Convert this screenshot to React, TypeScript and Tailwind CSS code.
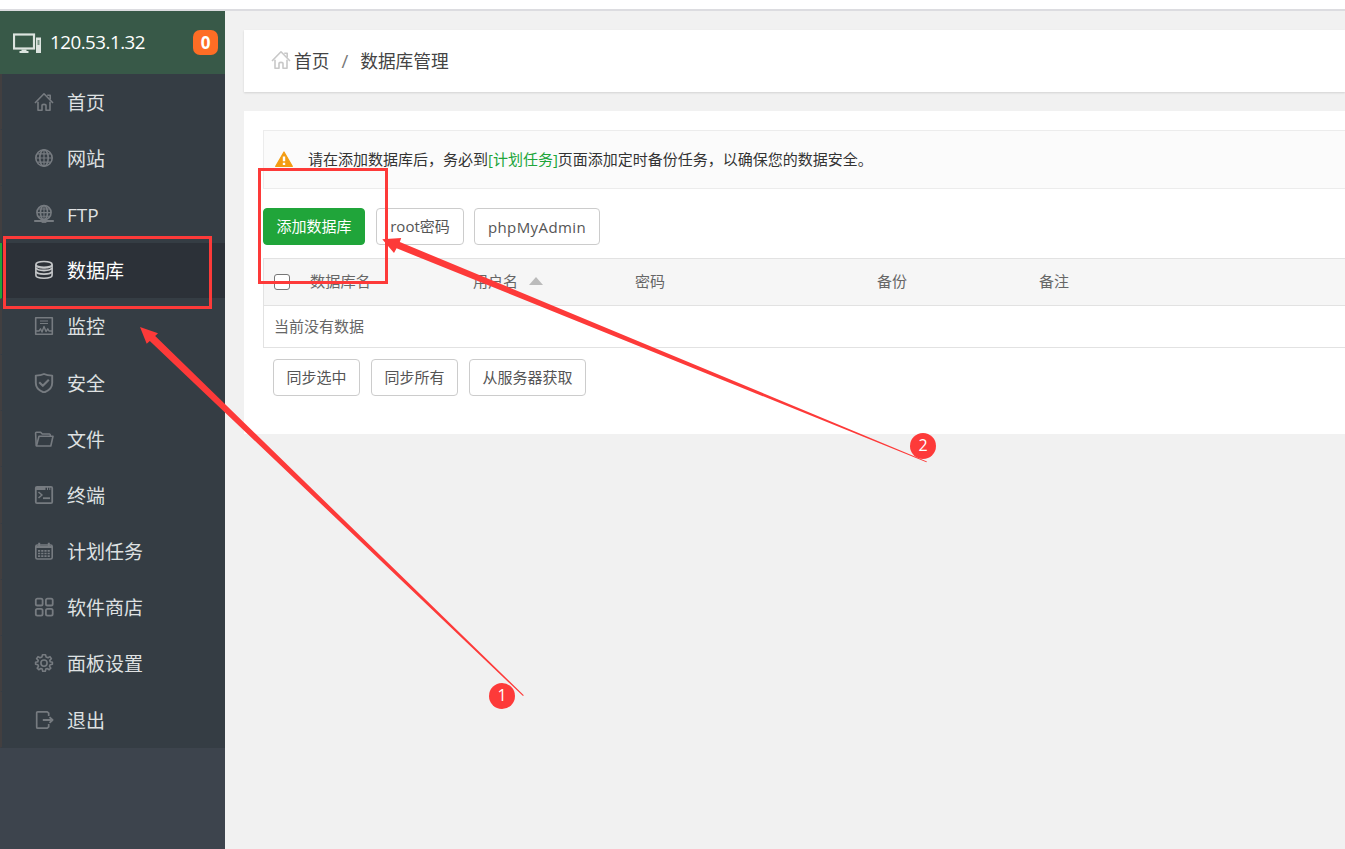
import React from "react";

type IconProps = { className?: string };

const Svg = ({ className = "", children }: IconProps & { children: React.ReactNode }) => (
  <svg
    viewBox="0 0 20 20"
    className={`h-5 w-5 shrink-0 ${className}`}
    fill="none"
    stroke="currentColor"
    strokeWidth="1.6"
    strokeLinejoin="round"
  >
    {children}
  </svg>
);

const HomeIcon = ({ className }: IconProps) => (
  <Svg className={className}>
    <path d="M1 11 L10 1.8 L19 11" />
    <path d="M13.2 3.2 H16.2 V7.6" />
    <path d="M4 9.8 V18.2 H8 V13.6 Q8 12.4 10 12.4 Q12 12.4 12 13.6 V18.2 H16 V9.8" />
  </Svg>
);
const GlobeIcon = () => (
  <Svg>
    <circle cx="10" cy="10" r="8.2" />
    <ellipse cx="10" cy="10" rx="4.2" ry="8.2" />
    <path d="M10 1.8 V18.2 M1.8 10 H18.2 M3.2 5.8 H16.8 M3.2 14.2 H16.8" strokeWidth="1.2" />
  </Svg>
);
const FtpIcon = () => (
  <Svg>
    <circle cx="10" cy="8.6" r="7.1" />
    <ellipse cx="10" cy="8.6" rx="3.5" ry="7.1" />
    <path d="M10 1.5 V15.5 M2.9 8.6 H17.1 M4.4 5 H15.6 M4.4 12.2 H15.6" strokeWidth="1.1" />
    <path d="M0.2 17 H19.8" strokeWidth="2" />
    <path d="M7.6 17 H12.4" strokeWidth="3.8" />
  </Svg>
);
const DatabaseIcon = () => (
  <Svg>
    <ellipse cx="10" cy="4.4" rx="8.1" ry="2.9" />
    <path d="M1.9 4.4 V15.3 C1.9 19.2 18.1 19.2 18.1 15.3 V4.4" />
    <path d="M2 8 C3.4 11.3 16.6 11.3 18 8 M2 11.6 C3.4 14.9 16.6 14.9 18 11.6" strokeWidth="1.9" />
    <path d="M2 6 C3.4 9 16.6 9 18 6" strokeWidth="1" />
  </Svg>
);
const MonitorIcon = () => (
  <Svg>
    <rect x="1.7" y="1.7" width="16.6" height="16.6" />
    <path d="M6 5 H14 M6 7.5 H14" strokeWidth="1.2" />
    <path d="M2 15 H5 L6.5 12.8 L8 16 L10 10.5 L12 15.5 L13.8 12.8 L15 15 H18" strokeWidth="1.4" />
  </Svg>
);
const ShieldIcon = () => (
  <Svg>
    <path d="M10 1 C12.5 2.3 15.5 2.6 18.2 2.6 V10 C18.2 15 14 18 10 19.5 C6 18 1.8 15 1.8 10 V2.6 C4.5 2.6 7.5 2.3 10 1 Z" strokeWidth="1.9" />
    <path d="M5.2 9.2 L8.8 12.8 L14.8 6.8" strokeWidth="2.1" />
  </Svg>
);
const FolderIcon = () => (
  <Svg>
    <path d="M2.2 16.6 L1.6 4 Q1.6 3.2 2.4 3.2 H6.6 L8.3 5 H15.6 Q16.4 5 16.4 7" />
    <path d="M2.4 17 L5 7.2 H19 L16.8 17 Z" />
  </Svg>
);
const TerminalIcon = () => (
  <Svg>
    <rect x="1.8" y="1.8" width="16.4" height="16.4" rx="1.2" strokeWidth="1.8" />
    <path d="M2 3.5 H11.5 M13 3.5 H14 M15.3 3.5 H16.3" strokeWidth="2.8" />
    <path d="M4.5 7 L8 10 L4.5 13" strokeWidth="1.6" />
    <path d="M9 13.2 H16" strokeWidth="1.8" />
  </Svg>
);
const CalendarIcon = () => (
  <Svg>
    <rect x="1.8" y="4" width="16.4" height="14" rx="1.6" />
    <path d="M2 6 H18" strokeWidth="2" />
    <path d="M5.2 1.7 V5 M14.8 1.7 V5" strokeWidth="2" />
    <path d="M4 9.8 H16 M4 12.5 H16 M4 15.2 H16" strokeWidth="1.7" strokeDasharray="2.2 1" />
  </Svg>
);
const AppsIcon = () => (
  <Svg>
    <rect x="1.8" y="1.7" width="6.8" height="6.8" rx="1.6" strokeWidth="1.8" />
    <rect x="11.9" y="1.7" width="6.8" height="6.8" rx="1.6" strokeWidth="1.8" />
    <rect x="1.8" y="11.8" width="6.8" height="6.8" rx="1.6" strokeWidth="1.8" />
    <rect x="11.9" y="11.8" width="6.8" height="6.8" rx="1.6" strokeWidth="1.8" />
  </Svg>
);
const GearIcon = () => (
  <Svg>
    <path d="M8.5 1.7 H11.5 L12.1 4 L14 4.8 L16 3.6 L17.4 5.6 L15.8 7.2 L16.2 8.8 L18.4 9.3 V11.2 L16.1 11.7 L15.5 13.2 L16.8 15.2 L15.2 16.7 L13.2 15.5 L11.8 16.1 L11.3 18.3 H8.7 L8.2 16.1 L6.8 15.5 L4.8 16.7 L3.2 15.2 L4.5 13.2 L3.9 11.7 L1.6 11.2 V9.3 L3.8 8.8 L4.2 7.2 L2.6 5.6 L4 3.6 L6 4.8 L7.9 4 Z" />
    <circle cx="10" cy="10.1" r="3.1" />
  </Svg>
);
const ExitIcon = () => (
  <Svg>
    <path d="M14.7 6 V3.2 L13.2 1.8 H3.7 Q2.7 1.8 2.7 2.8 V17.2 Q2.7 18.2 3.7 18.2 H13.2 L14.7 16.8 V14" strokeWidth="1.7" />
    <path d="M8.8 10 H18.5 M15.5 7.2 L18.6 10 L15.5 12.8" strokeWidth="1.8" />
  </Svg>
);

const menu = [
  { label: "首页", Icon: HomeIcon },
  { label: "网站", Icon: GlobeIcon },
  { label: "FTP", Icon: FtpIcon },
  { label: "数据库", Icon: DatabaseIcon, active: true },
  { label: "监控", Icon: MonitorIcon },
  { label: "安全", Icon: ShieldIcon },
  { label: "文件", Icon: FolderIcon },
  { label: "终端", Icon: TerminalIcon },
  { label: "计划任务", Icon: CalendarIcon },
  { label: "软件商店", Icon: AppsIcon },
  { label: "面板设置", Icon: GearIcon },
  { label: "退出", Icon: ExitIcon },
];

const Sidebar = () => (
  <aside className="flex w-[225px] shrink-0 flex-col bg-[#3d444d]">
    <header className="flex h-[63px] shrink-0 items-center bg-[#385948] pr-[7px] pl-[13px] text-white">
      <svg viewBox="0 0 28 20" className="h-5 w-7 shrink-0" fill="none" stroke="#dce4df">
        <rect x="1" y="1.5" width="20" height="14" strokeWidth="2.2" />
        <path d="M6.5 19 H15.5" strokeWidth="2" />
        <path d="M8.5 17.5 H13.5" strokeWidth="2" />
        <rect x="23" y="4.5" width="5" height="15.5" fill="#dce4df" stroke="none" />
        <path d="M25.5 7 V12" stroke="#789484" strokeWidth="2" />
      </svg>
      <span className="ml-[9px] text-[18.75px] leading-none tracking-[-0.5px]">120.53.1.32</span>
      <span className="ml-auto flex h-[25px] w-[25px] items-center justify-center rounded-[7px] bg-[#fe6d25] text-[17px] leading-none font-bold">
        0
      </span>
    </header>
    <ul className="bg-[#353d44]">
      {menu.map(({ label, Icon, active }) => (
        <li
          key={label}
          className={`flex h-[56.2px] items-center border-b border-l-2 border-b-[#353d44] pl-8 ${
            active ? "border-l-[#20a53a] bg-[#2c3138] text-white" : "border-l-[#423f40] text-[#dfe1e2]"
          }`}
        >
          <span className={active ? "text-[#c5c7c9]" : "text-[#767b80]"}>
            <Icon />
          </span>
          <span className="ml-[13px] pt-[3px] text-[19px] leading-none">{label}</span>
        </li>
      ))}
    </ul>
  </aside>
);

const outlineButton = "border-[#cccccc] bg-white text-[#555]";
const primaryButton = "border-[#20a53a] bg-[#20a53a] text-white";

const Button = ({
  children,
  className,
  primary = false,
}: {
  children: React.ReactNode;
  className: string;
  primary?: boolean;
}) => (
  <button
    className={`flex h-[37px] shrink-0 items-center justify-center rounded-[4px] border text-[15px] leading-none whitespace-nowrap ${
      primary ? primaryButton : outlineButton
    } ${className}`}
  >
    {children}
  </button>
);

const Notice = () => (
  <div className="flex h-[59px] items-center border border-r-0 border-[#ececec] bg-[#fbfbfb] pl-[10px] text-[15px] text-[#333]">
    <svg viewBox="0 0 20 18" className="mb-[2px] h-[18px] w-5 shrink-0">
      <path d="M10 2 L18.3 16.4 H1.7 Z" fill="#f39c12" stroke="#f39c12" strokeWidth="1.2" strokeLinejoin="round" />
      <path d="M10 6.4 V11.2 M10 12.8 V15" stroke="#fff" strokeWidth="2.4" />
    </svg>
    <span className="ml-[14px] whitespace-nowrap">
      请在添加数据库后，务必到<span className="text-[#20a53a]">[计划任务]</span>页面添加定时备份任务，以确保您的数据安全。
    </span>
  </div>
);

const DatabaseTable = () => (
  <div className="mt-[13px] border border-r-0 border-[#e2e2e2] text-[15px] text-[#666]">
    <div className="grid h-[46px] grid-cols-[36px_162px_162px_242px_162px_1fr] items-center bg-[#f6f6f6] pb-[2px] pl-[10px]">
      <span className="mt-[2px] h-4 w-4 rounded-[3px] border border-[#767676] bg-white" />
      <span className="text-[15.2px]">数据库名</span>
      <span className="flex items-center pl-[1px]">
        用户名
        <svg viewBox="0 0 14 8" className="ml-[11px] h-2 w-[14px]">
          <path d="M7 0 L14 8 H0 Z" fill="#bbb" />
        </svg>
      </span>
      <span className="pl-[1px]">密码</span>
      <span className="pl-[1px]">备份</span>
      <span className="pl-[1px]">备注</span>
    </div>
    <div className="flex h-[42px] items-center border-t border-[#e2e2e2] pl-[10px]">当前没有数据</div>
  </div>
);

const Annotations = () => (
  <div className="pointer-events-none absolute inset-0">
    <div className="absolute top-[236px] left-[3px] h-[73px] w-[209px] border-[3px] border-[#fd3a39]" />
    <div className="absolute top-[168px] left-[258px] h-[116px] w-[130px] border-[3px] border-[#fd3a39]" />
    <svg viewBox="0 0 1345 849" className="absolute inset-0 h-full w-full" fill="#fd3a39">
      <path d="M140 327 L158 333.3 L155.2 336 L523.8 695.2 L523 696 L149.8 341 L146.7 343.8 Z" />
      <path d="M382.3 239.3 L401.2 238 L399.8 242 L926.9 461.4 L926.5 462.3 L396.6 248.3 L394 253 Z" />
    </svg>
    <span className="absolute top-[683px] left-[489px] flex h-[26px] w-[26px] items-center justify-center rounded-full bg-[#fd3a39] pb-[3px] text-[16px] leading-none text-white">
      1
    </span>
    <span className="absolute top-[433px] left-[910px] flex h-[26px] w-[26px] items-center justify-center rounded-full bg-[#fd3a39] pb-[3px] text-[16px] leading-none text-white">
      2
    </span>
  </div>
);

export default function App() {
  return (
    <div className="relative flex h-[849px] w-full flex-col overflow-hidden bg-white font-['Open_Sans','Noto_Sans_CJK_SC',sans-serif]">
      <div className="h-[11px] shrink-0 border-b-2 border-[#dcdce0]" />
      <div className="flex min-h-0 flex-1">
        <Sidebar />
        <main className="min-w-0 flex-1 bg-[#f1f1f1] pt-[19px] pl-[19px]">
          <nav className="flex h-[62px] items-center bg-white pl-7 text-[17.7px] text-[#444] shadow-[0_1px_2px_rgba(0,0,0,0.13)]">
            <HomeIcon className="-ml-[1px] mb-[2px] text-[#c8c8c8]" />
            <span className="ml-[3px]">首页</span>
            <span className="mx-[12px] text-[18.5px] text-[#777]">/</span>
            <span>数据库管理</span>
          </nav>
          <section className="mt-[19px] h-[323px] bg-white pt-[19px] pl-[19px]">
            <Notice />
            <div className="mt-[19px] flex">
              <Button primary className="mr-[11px] w-[102px]">添加数据库</Button>
              <Button className="mr-[10px] w-[88px]">root密码</Button>
              <Button className="w-[126px] pt-[2px] tracking-[0.4px]">phpMyAdmin</Button>
            </div>
            <DatabaseTable />
            <div className="mt-[11px] flex gap-[11px] pl-[10px]">
              <Button className="w-[87px]">同步选中</Button>
              <Button className="w-[87px]">同步所有</Button>
              <Button className="w-[117px]">从服务器获取</Button>
            </div>
          </section>
        </main>
      </div>
      <Annotations />
    </div>
  );
}
